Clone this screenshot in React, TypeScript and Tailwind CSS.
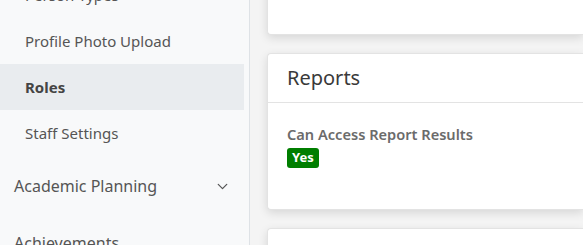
import { ChevronDown } from "lucide-react";

const subItems = ["Person Types", "Profile Photo Upload", "Roles", "Staff Settings"];

const App = () => {
  return (
    <div
      className="flex h-[245px] w-[583px] overflow-hidden bg-[#f4f4f4]"
      style={{ fontFamily: '"Noto Sans", "Open Sans", sans-serif' }}
    >
      <aside className="w-[250px] shrink-0 bg-[#f8f9fa] border-r border-[#dee2e6]">
        <div className="-mt-[28px] pr-[5px]">
          {subItems.map((s) => (
            <div
              key={s}
              className={
                s === "Roles"
                  ? "h-[46px] flex items-center pl-[25px] bg-[#e9ecef] text-[15px] font-bold text-[#444]"
                  : "h-[46px] flex items-center pl-[25px] text-[15px] text-[#555]"
              }
            >
              {s}
            </div>
          ))}
          <div className="h-[60px] flex items-center justify-between pl-[14px] pr-[13px] text-[16px] text-[#555]">
            <span>Academic Planning</span>
            <ChevronDown className="w-[17px] h-[17px] text-[#555]" strokeWidth={1.75} />
          </div>
          <div className="h-[54px] flex items-center pl-[14px] text-[16px] text-[#555]">Achievements</div>
        </div>
      </aside>
      <main className="flex-1 pl-[17px] flex flex-col gap-[18px]">
        <div className="-mt-[65px] h-[100px] shrink-0 bg-white rounded-l-[4px] border border-r-0 border-[#e3e3e3] shadow-[0_3px_10px_rgba(0,0,0,0.12)]" />
        <section className="h-[157px] shrink-0 bg-white rounded-l-[4px] border border-r-0 border-[#e3e3e3] shadow-[0_3px_10px_rgba(0,0,0,0.12)] flex flex-col">
          <div className="h-[49px] flex items-center pl-[19px] border-b border-[#e3e3e3] text-[20px] text-[#3a3a3a]">
            Reports
          </div>
          <div className="pl-[19px] pt-[21px]">
            <div className="text-[14.6px] font-semibold text-[#6b6b6b] leading-[20px]">Can Access Report Results</div>
            <span className="mt-[3px] inline-flex items-center h-[20px] px-[5px] rounded-[3px] bg-[#007e00] text-white text-[13px] font-bold">
              Yes
            </span>
          </div>
        </section>
        <div className="h-[60px] shrink-0 bg-white rounded-l-[4px] border border-r-0 border-[#e3e3e3] shadow-[0_3px_10px_rgba(0,0,0,0.12)]" />
      </main>
    </div>
  );
};

export default App;
